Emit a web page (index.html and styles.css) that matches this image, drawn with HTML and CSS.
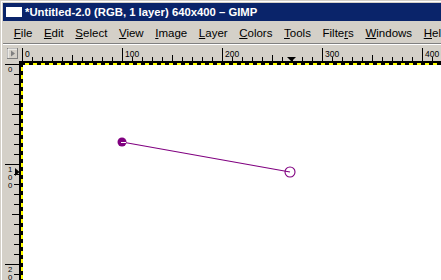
FILE: index.html
```html
<!DOCTYPE html>
<html>
<head>
<meta charset="utf-8">
<link rel="stylesheet" href="styles.css">
</head>
<body>
<div class="window">
  <div class="titlebar">
    <span class="app-icon"></span>
    <span class="title">*Untitled-2.0 (RGB, 1 layer) 640x400 – GIMP</span>
  </div>
  <div class="menubar">
    <span class="menu"><u>F</u>ile</span>
    <span class="menu"><u>E</u>dit</span>
    <span class="menu"><u>S</u>elect</span>
    <span class="menu"><u>V</u>iew</span>
    <span class="menu"><u>I</u>mage</span>
    <span class="menu"><u>L</u>ayer</span>
    <span class="menu"><u>C</u>olors</span>
    <span class="menu"><u>T</u>ools</span>
    <span class="menu">Filte<u>r</u>s</span>
    <span class="menu"><u>W</u>indows</span>
    <span class="menu"><u>H</u>elp</span>
  </div>
  <div class="sep"></div>
  <div class="workspace">
    <div class="corner">
      <svg width="16" height="16" viewBox="0 0 16 16">
        <rect x="4.5" y="3.5" width="10" height="10" fill="#d4d0c8" stroke="#808080"/>
        <path d="M5 4h9" stroke="#fff"/>
        <path d="M5 4v9" stroke="#fff"/>
        <path d="M8 5.5l4 3-4 3z" fill="#808080"/>
      </svg>
    </div>
    <div class="hruler">
      <svg width="430" height="16" viewBox="0 0 430 16">
        <defs>
          <pattern id="h10" x="3" y="0" width="10" height="16" patternUnits="userSpaceOnUse">
            <rect x="0" y="12" width="1" height="4" fill="#000"/>
          </pattern>
          <pattern id="h50" x="3" y="0" width="50" height="16" patternUnits="userSpaceOnUse">
            <rect x="0" y="10" width="1" height="6" fill="#000"/>
          </pattern>
          <pattern id="h100" x="3" y="0" width="100" height="16" patternUnits="userSpaceOnUse">
            <rect x="0" y="3" width="1" height="13" fill="#000"/>
          </pattern>
        </defs>
        <rect x="0" y="0" width="430" height="16" fill="url(#h10)"/>
        <rect x="0" y="0" width="430" height="16" fill="url(#h50)"/>
        <rect x="0" y="0" width="430" height="16" fill="url(#h100)"/>
        <g class="rlabel">
          <text x="6" y="12">0</text>
          <text x="106" y="12">100</text>
          <text x="206" y="12">200</text>
          <text x="306" y="12">300</text>
          <text x="406" y="12">400</text>
        </g>
        <path d="M268 12h9l-4.5 4.5z" fill="#000"/>
      </svg>
    </div>
    <div class="vruler">
      <svg width="16" height="230" viewBox="0 0 16 230">
        <defs>
          <pattern id="v10" x="0" y="3" width="16" height="10" patternUnits="userSpaceOnUse">
            <rect x="11" y="0" width="5" height="1" fill="#000"/>
          </pattern>
          <pattern id="v50" x="0" y="3" width="16" height="50" patternUnits="userSpaceOnUse">
            <rect x="9" y="0" width="7" height="1" fill="#000"/>
          </pattern>
          <pattern id="v100" x="0" y="3" width="16" height="100" patternUnits="userSpaceOnUse">
            <rect x="2" y="0" width="14" height="1" fill="#000"/>
          </pattern>
        </defs>
        <rect x="0" y="0" width="16" height="230" fill="url(#v10)"/>
        <rect x="0" y="0" width="16" height="230" fill="url(#v50)"/>
        <rect x="0" y="0" width="16" height="230" fill="url(#v100)"/>
        <g class="rlabel vlabel">
          <text x="5" y="11">0</text>
          <text x="5" y="111">1</text>
          <text x="5" y="119">0</text>
          <text x="5" y="127">0</text>
          <text x="5" y="211">2</text>
          <text x="5" y="219">0</text>
        </g>
        <path d="M12 107l4.5 4-4.5 4z" fill="#000"/>
      </svg>
    </div>
    <div class="canvas">
      <div class="image">
        <svg class="paths" width="420" height="220" viewBox="0 0 420 220">
          <line x1="101" y1="79" x2="269" y2="109" stroke="#800080" stroke-width="1.2"/>
          <circle cx="101" cy="79" r="4.5" fill="#800080"/>
          <path d="M100 79.5h5" stroke="#fff" stroke-width="1"/>
          <circle cx="269" cy="109" r="5" fill="none" stroke="#800080" stroke-width="1.1"/>
        </svg>
      </div>
    </div>
  </div>
</div>
</body>
</html>
```

FILE: styles.css
```css
html, body {
  margin: 0;
  padding: 0;
}

body {
  background: #d4d0c8;
  font-family: "Liberation Sans", Arial, sans-serif;
  width: 441px;
  height: 280px;
  overflow: hidden;
}

.window {
  box-sizing: border-box;
  height: 280px;
  border-top: 1px solid #d4d0c8;
  border-left: 1px solid #d4d0c8;
  box-shadow: inset 1px 1px #ffffff;
  padding: 2px 0 0 2px;
  display: flex;
  flex-direction: column;
}

.titlebar {
  height: 18px;
  flex: none;
  background: #0a246a;
  display: flex;
  align-items: center;
  color: #ffffff;
  font-weight: bold;
  font-size: 11.3px;
  white-space: nowrap;
  overflow: hidden;
}

.app-icon {
  width: 16px;
  height: 10px;
  background: #ffffff;
  margin: 0 3px 0 3px;
  flex: none;
}

.menubar {
  height: 22px;
  flex: none;
  display: flex;
  align-items: center;
  padding-left: 5px;
  padding-top: 1px;
  box-sizing: border-box;
  font-size: 11.5px;
  color: #000000;
  white-space: nowrap;
  overflow: hidden;
}

.menu {
  padding: 0 5.8px;
}

.menu u {
  text-decoration-thickness: 1px;
  text-underline-offset: 1px;
}

.sep {
  height: 0;
  flex: none;
  border-top: 1px solid #808080;
  border-bottom: 1px solid #ffffff;
}

.workspace {
  flex: 1;
  min-height: 0;
  display: grid;
  grid-template-columns: 16px 1fr;
  grid-template-rows: 16px 1fr;
}

.corner,
.hruler,
.vruler {
  background: #d4d0c8;
  overflow: hidden;
}

.corner svg,
.hruler svg,
.vruler svg {
  display: block;
}

.rlabel {
  font-family: "Liberation Sans", Arial, sans-serif;
  font-size: 8.5px;
  fill: #000000;
}

.vlabel {
  font-size: 7.8px;
}

.canvas {
  border-top: 2px solid #000000;
  border-left: 2px solid #000000;
  overflow: hidden;
  min-height: 0;
}

.image {
  height: 100%;
  background:
    repeating-linear-gradient(90deg, #000 0 4px, #ff0 4px 8px) top left / 100% 2px no-repeat,
    repeating-linear-gradient(180deg, #000 0 4px, #ff0 4px 8px) top left / 2px 100% no-repeat,
    #ffffff;
}

.paths {
  display: block;
}
```
